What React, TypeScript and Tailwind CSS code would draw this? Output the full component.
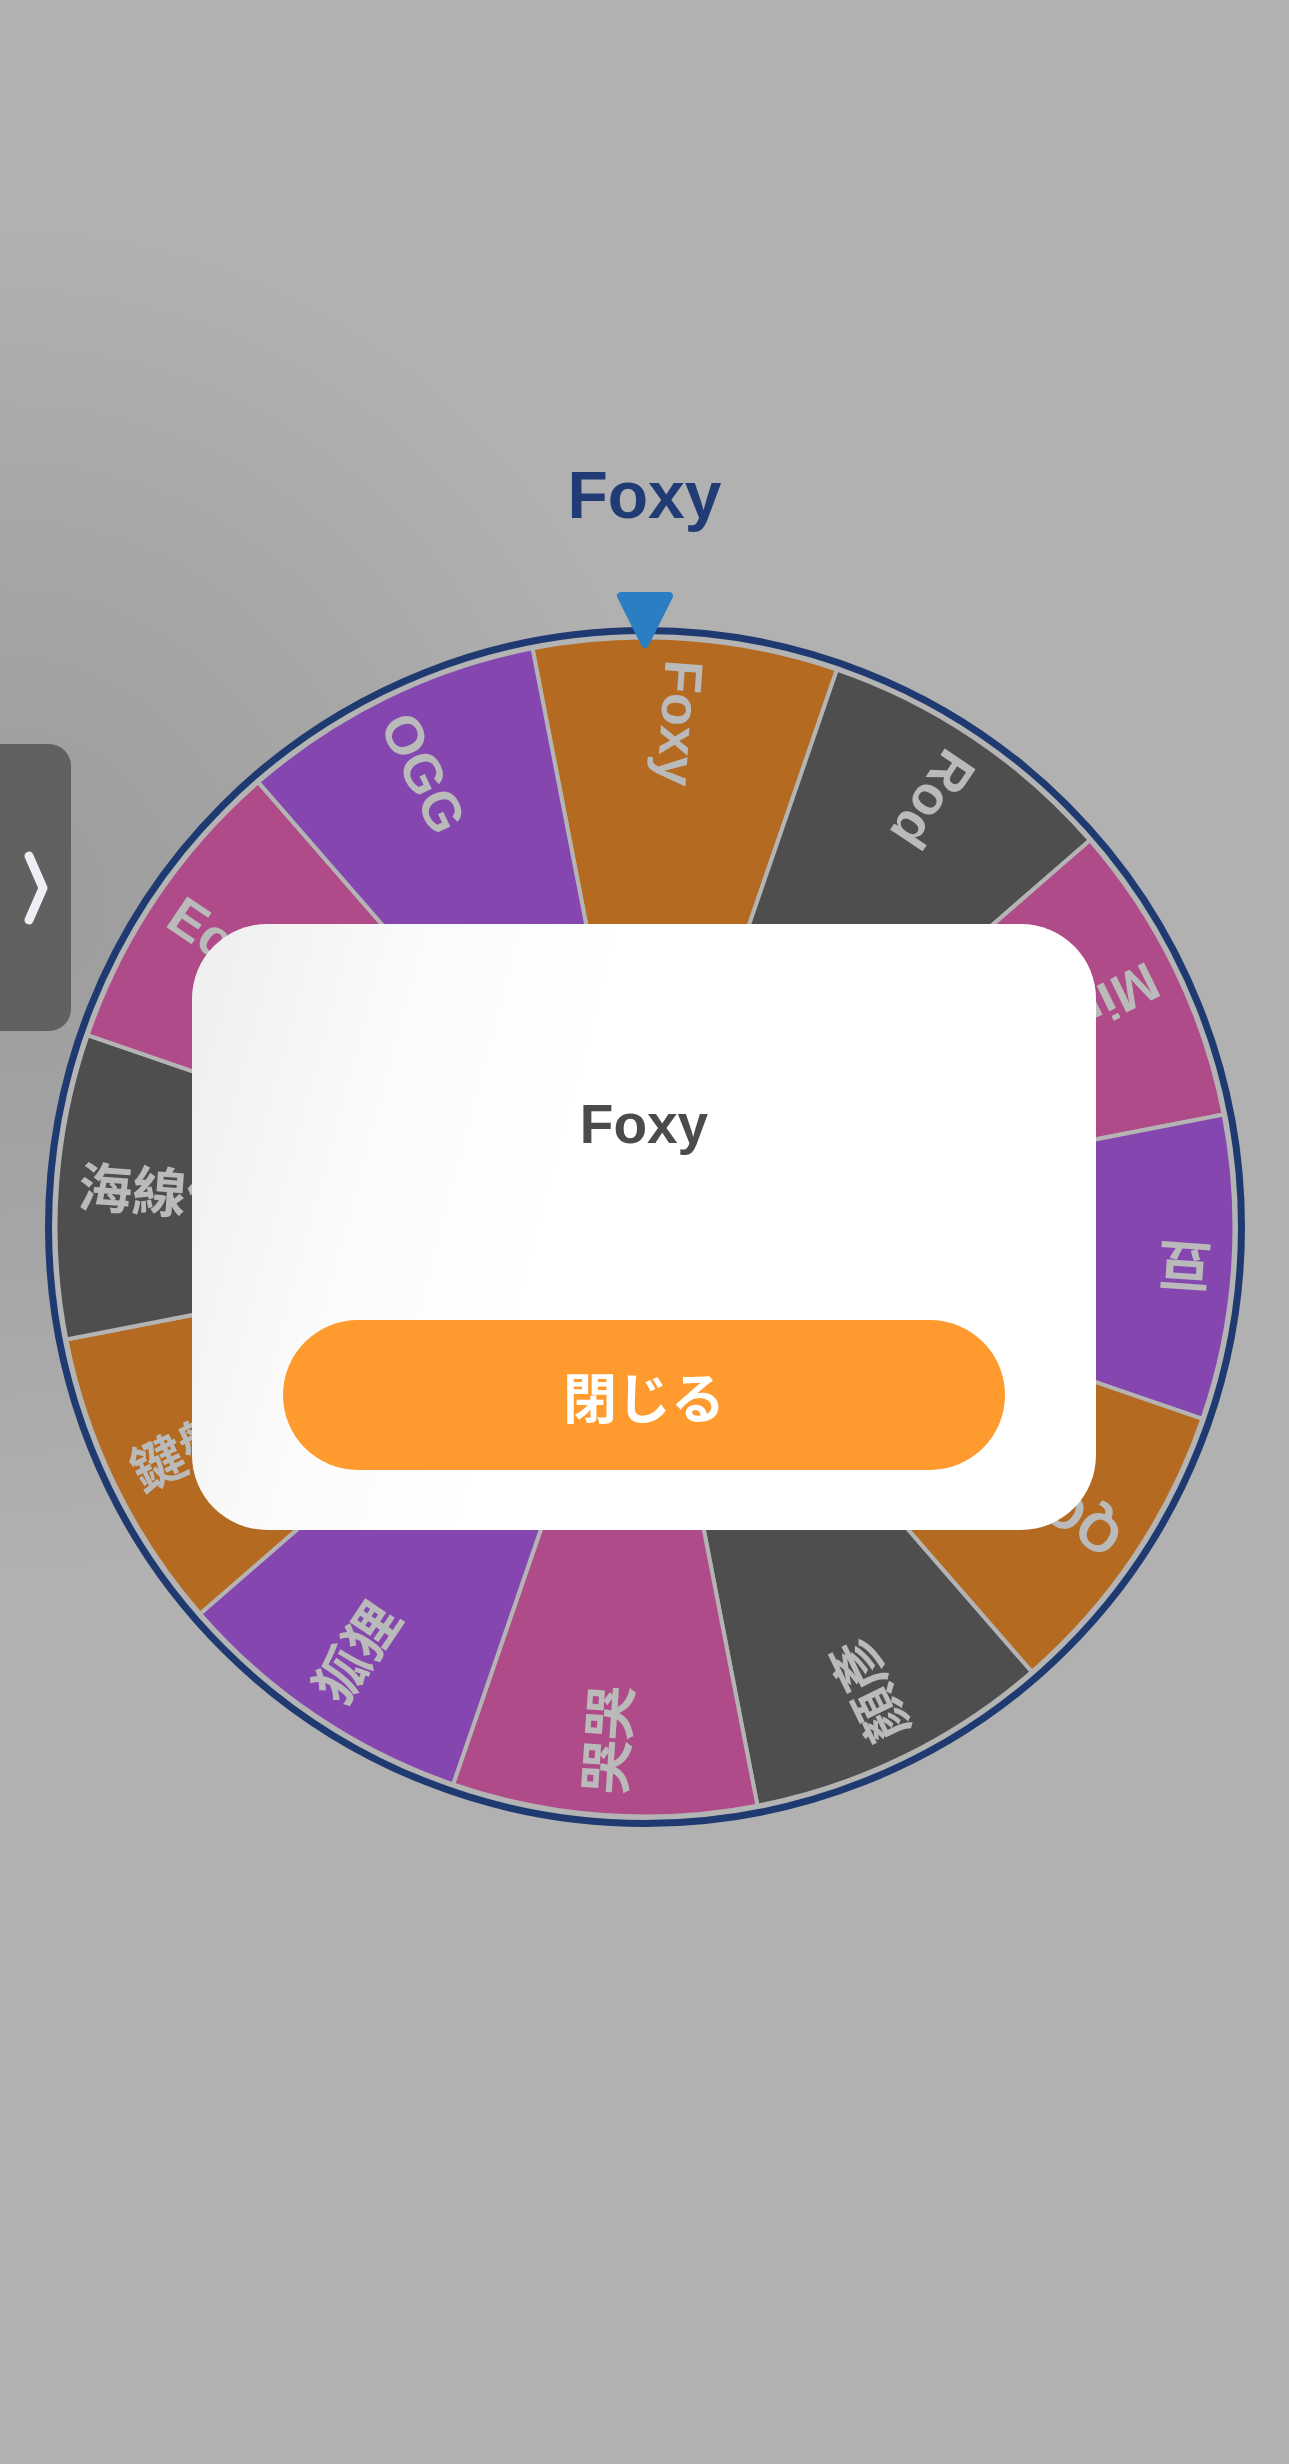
import React from "react";

// Wheel result screen: dimmed wheel behind a "result" dialog
const ORANGE = "#b46b21";
const GRAY = "#4e4e4e";
const PINK = "#b04b89";
const PURPLE = "#8546b0";

const SEGMENTS = [
  { label: "Foxy", color: ORANGE },
  { label: "Rod", color: GRAY },
  { label: "Mimi", color: PINK },
  { label: "豆", color: PURPLE },
  { label: "QQ", color: ORANGE },
  { label: "顏彥", color: GRAY },
  { label: "哭哭", color: PINK },
  { label: "狐狸", color: PURPLE },
  { label: "鍵盤", color: ORANGE },
  { label: "海線仔", color: GRAY },
  { label: "Echo", color: PINK },
  { label: "OGG", color: PURPLE },
];

const OFFSET = 4;
const STEP = 360 / SEGMENTS.length;

function polar(r: number, deg: number) {
  const t = (deg * Math.PI) / 180;
  return [600 + r * Math.sin(t), 600 - r * Math.cos(t)];
}

function Wheel() {
  const r = 589.5;
  return (
    <div className="relative mx-auto mt-[99px] h-[1200px] w-[1200px]">
      <svg viewBox="0 0 1200 1200" className="absolute inset-0 h-full w-full">
        <circle cx="600" cy="600" r="593" fill="#b4b4b4" />
        {SEGMENTS.map((s, i) => {
          const a = i * STEP + OFFSET;
          const [x1, y1] = polar(r, a - STEP / 2);
          const [x2, y2] = polar(r, a + STEP / 2);
          return (
            <path
              key={i}
              d={`M600 600 L${x1} ${y1} A${r} ${r} 0 0 1 ${x2} ${y2} Z`}
              fill={s.color}
              stroke="#b4b4b4"
              strokeWidth="4"
              strokeLinejoin="round"
            />
          );
        })}
        <circle cx="600" cy="600" r="596.5" fill="none" stroke="#1f3a70" strokeWidth="7" />
      </svg>

      {SEGMENTS.map((s, i) => (
        <div
          key={i}
          className="absolute left-0 top-[570px] flex h-[60px] w-[600px] origin-right items-center pl-[32px]"
          style={{ transform: `rotate(${90 + i * STEP + OFFSET}deg)` }}
        >
          <span className="whitespace-nowrap text-[54px] font-bold leading-none text-[#bababa]">{s.label}</span>
        </div>
      ))}

      {/* pointer */}
      <svg viewBox="0 0 60 60" className="absolute left-1/2 top-[-37px] h-[60px] w-[60px] -translate-x-1/2">
        <path d="M6 6 L54 6 L30 54 Z" fill="#2a7ec1" stroke="#2a7ec1" strokeWidth="8" strokeLinejoin="round" />
      </svg>
    </div>
  );
}

export default function App() {
  return (
    <div className="relative h-[2464px] w-full overflow-hidden bg-[#b1b1b1] font-['Liberation_Sans','Noto_Sans_CJK_TC',sans-serif]">
      {/* soft shadow from side drawer */}
      <div className="pointer-events-none absolute inset-0 bg-[radial-gradient(circle_at_0px_900px,rgba(0,0,0,0.12)_0px,rgba(0,0,0,0.06)_380px,rgba(0,0,0,0)_680px)]" />

      <div className="relative flex flex-col items-center pt-[462px]">
        <h1 className="text-[66px] font-bold leading-none text-[#213b74]">Foxy</h1>
        <Wheel />
      </div>

      {/* side tab */}
      <div className="absolute left-0 top-[744px] flex h-[287px] w-[71px] items-center justify-center rounded-r-[22px] bg-[#616161]">
        <svg viewBox="0 0 24 80" className="h-[80px] w-[24px]">
          <path d="M5 8 L19 40 L5 72" fill="none" stroke="#eeeef4" strokeWidth="9" strokeLinecap="round" strokeLinejoin="round" />
        </svg>
      </div>

      {/* result dialog */}
      <div className="absolute left-[192px] top-[924px] flex h-[606px] w-[904px] flex-col items-center rounded-[75px] bg-[linear-gradient(105deg,#eeeeee_0%,#fbfbfb_22%,#ffffff_40%)] px-[91px] pt-[167px]">
        <p className="h-[66px] text-[55px] font-bold leading-[66px] text-[#4b4b4b]">Foxy</p>
        <button className="mt-[163px] flex h-[150px] w-full items-center justify-center rounded-full bg-[#ff9a2f] font-['Noto_Sans_CJK_JP',sans-serif] text-[54px] font-bold text-white">
          閉じる
        </button>
      </div>
    </div>
  );
}
